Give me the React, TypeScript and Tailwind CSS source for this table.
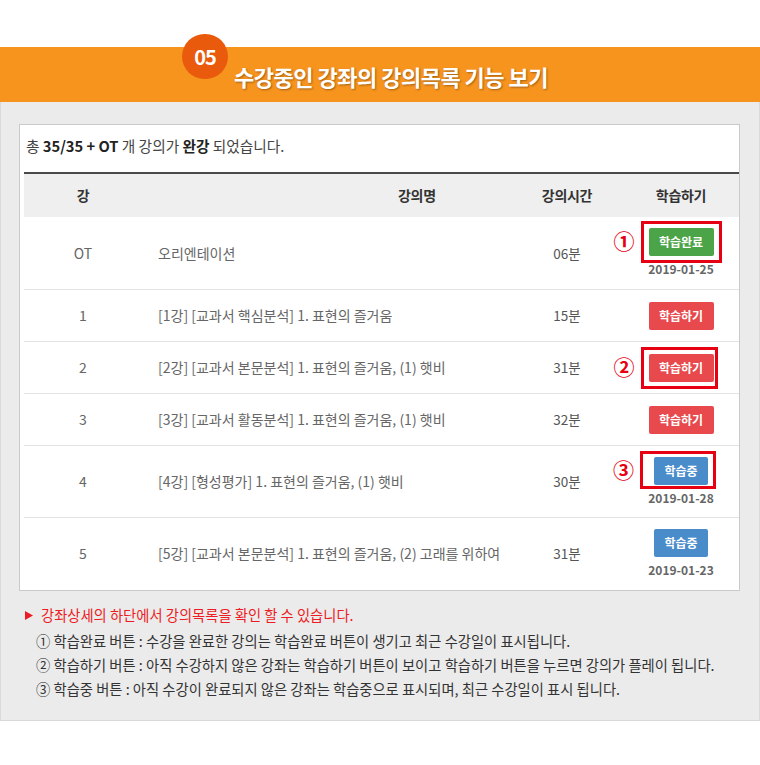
import React from "react";

type Row = {
  no: string;
  title: string;
  time: string;
  btn: "done" | "go" | "ing";
  date?: string;
  h: string;
  mark?: { num: string; box: string; numPos: string };
};

const rows: Row[] = [
  {
    no: "OT",
    title: "오리엔테이션",
    time: "06분",
    btn: "done",
    date: "2019-01-25",
    h: "h-[73px]",
    mark: { num: "①", box: "-top-[7px] -bottom-[7px] -left-[8px] -right-[8px]", numPos: "right-[calc(100%+14px)]" },
  },
  { no: "1", title: "[1강] [교과서 핵심분석] 1. 표현의 즐거움", time: "15분", btn: "go", h: "h-[52px]" },
  {
    no: "2",
    title: "[2강] [교과서 본문분석] 1. 표현의 즐거움, (1) 햇비",
    time: "31분",
    btn: "go",
    h: "h-[52px]",
    mark: { num: "②", box: "-top-[7px] -bottom-[7px] -left-[8px] -right-[4px]", numPos: "right-[calc(100%+14px)]" },
  },
  { no: "3", title: "[3강] [교과서 활동분석] 1. 표현의 즐거움, (1) 햇비", time: "32분", btn: "go", h: "h-[52px]" },
  {
    no: "4",
    title: "[4강] [형성평가] 1. 표현의 즐거움, (1) 햇비",
    time: "30분",
    btn: "ing",
    date: "2019-01-28",
    h: "h-[72px]",
    mark: { num: "③", box: "-top-[6px] -bottom-[4px] -left-[14px] -right-[8px]", numPos: "right-[calc(100%+20px)]" },
  },
  {
    no: "5",
    title: "[5강] [교과서 본문분석] 1. 표현의 즐거움, (2) 고래를 위하여",
    time: "31분",
    btn: "ing",
    date: "2019-01-23",
    h: "h-[71px]",
  },
];

function Btn({ kind }: { kind: Row["btn"] }) {
  if (kind === "done")
    return (
      <div className="flex h-[28px] w-[65px] items-center justify-center rounded-[2px] bg-[#4ba448] text-[12px] font-bold text-white">
        학습완료
      </div>
    );
  if (kind === "go")
    return (
      <div className="flex h-[28px] w-[65px] items-center justify-center rounded-[2px] bg-[#e7494d] text-[12px] font-bold text-white">
        학습하기
      </div>
    );
  return (
    <div className="flex h-[28px] w-[54px] items-center justify-center rounded-[2px] bg-[#4a8cca] text-[12px] font-bold text-white">
      학습중
    </div>
  );
}

export default function App() {
  return (
    <div className="h-[765px] w-[760px] bg-white font-['Noto_Sans_CJK_KR','Noto_Sans',sans-serif]">
      <div className="h-[47px]" />
      <div className="relative flex h-[55px] items-center bg-[#f7941e] pl-[234px] pt-[3px]">
        <div className="absolute left-[182px] top-[-13px] flex h-[45px] w-[46px] items-center justify-center rounded-full bg-[#e95a0c] text-[20px] font-bold leading-none tracking-[-1px] text-white">
          05
        </div>
        <div className="text-[22px] font-bold leading-none tracking-[-0.5px] text-white [text-shadow:1px_1px_2px_rgba(0,0,0,0.35)]">
          수강중인 강좌의 강의목록 기능 보기
        </div>
      </div>
      <div className="h-[619px] border-x border-b border-[#d9d9d9] bg-[#ebebeb] pl-[18px] pr-[19px] pt-[22px]">
        <div className="h-[467px] border border-[#cacaca] bg-white pl-[4px]">
          <div className="h-[47px] pl-[2px] pt-[11px] text-[14.7px] leading-[20px] text-[#444]">
            총 <b className="text-[#222]">35/35 + OT</b> 개 강의가 <b className="text-[#222]">완강</b> 되었습니다.
          </div>
          <div className="grid h-[45px] grid-cols-[118px_1fr_112px_116px] items-center border-t-2 border-[#4a4a4a] bg-[#efefef] text-[14px] font-bold tracking-[-0.3px] text-[#333]">
            <div className="text-center">강</div>
            <div className="pl-[256px]">강의명</div>
            <div className="text-center">강의시간</div>
            <div className="text-center">학습하기</div>
          </div>
          {rows.map((r, i) => (
            <div
              key={r.no}
              className={`grid grid-cols-[118px_1fr_112px_116px] items-center text-[14px] text-[#666] ${r.h} ${
                i < rows.length - 1 ? "border-b border-[#e3e3e3]" : ""
              }`}
            >
              <div className="text-center">{r.no}</div>
              <div className="pl-[16px]">{r.title}</div>
              <div className="text-center text-[13.5px] text-[#555]">{r.time}</div>
              <div className="flex flex-col items-center justify-center">
                <div className="relative">
                  <Btn kind={r.btn} />
                  {r.mark && (
                    <>
                      <div className={`absolute border-[3px] border-[#e60012] ${r.mark.box}`} />
                      <div
                        className={`absolute top-0 bottom-0 flex items-center pb-[3px] text-[21px] font-bold leading-none text-[#e60012] ${r.mark.numPos}`}
                      >
                        {r.mark.num}
                      </div>
                    </>
                  )}
                </div>
                {r.date && (
                  <div className="mt-[4px] text-[12px] font-bold leading-[18px] text-[#666]">{r.date}</div>
                )}
              </div>
            </div>
          ))}
        </div>
        <div className="mt-[12px] text-[14.3px] leading-[24px]">
          <div className="flex items-center pl-[6px] text-[#ed1c24]">
            <svg width="8" height="9" viewBox="0 0 8 9" className="mr-[8px]">
              <path d="M0 0 L8 4.5 L0 9 Z" fill="#ed1c24" />
            </svg>
            강좌상세의 하단에서 강의목록을 확인 할 수 있습니다.
          </div>
          <div className="mt-[2px] pl-[17px] text-[#333]">
            <div>① 학습완료 버튼 : 수강을 완료한 강의는 학습완료 버튼이 생기고 최근 수강일이 표시됩니다.</div>
            <div>② 학습하기 버튼 : 아직 수강하지 않은 강좌는 학습하기 버튼이 보이고 학습하기 버튼을 누르면 강의가 플레이 됩니다.</div>
            <div>③ 학습중 버튼 : 아직 수강이 완료되지 않은 강좌는 학습중으로 표시되며, 최근 수강일이 표시 됩니다.</div>
          </div>
        </div>
      </div>
    </div>
  );
}
